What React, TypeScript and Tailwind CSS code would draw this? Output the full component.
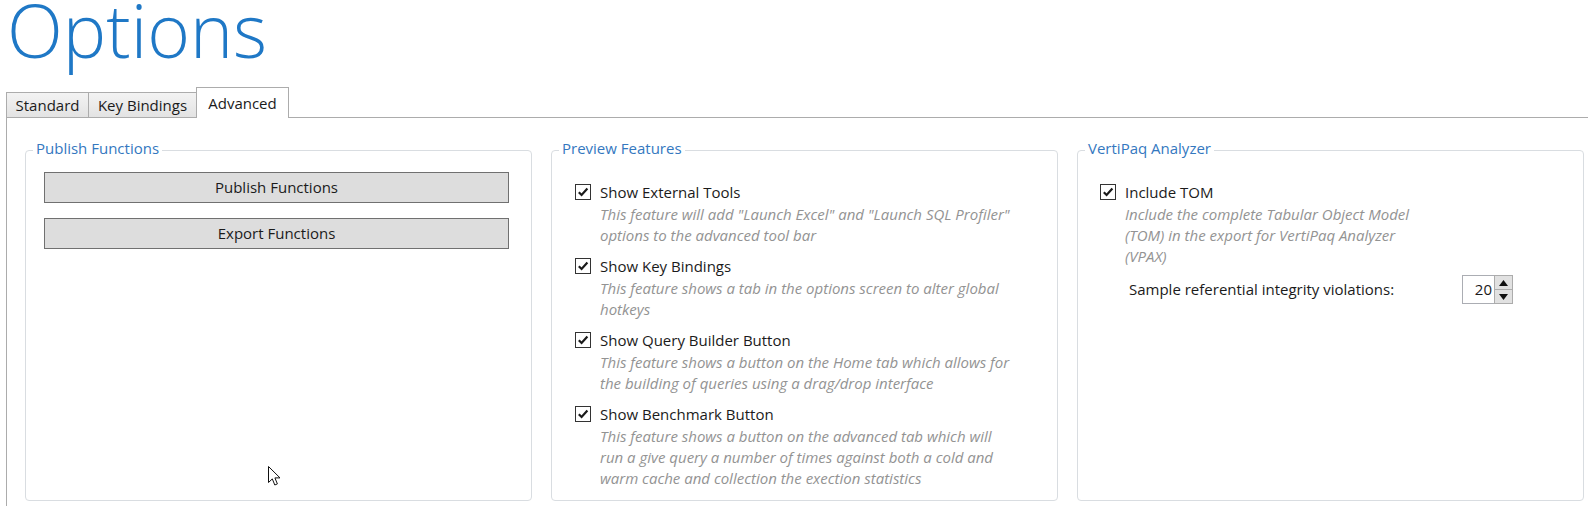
import { ReactNode } from "react";

function CheckBox() {
  return (
    <span className="mt-[2px] flex h-[16px] w-[16px] shrink-0 items-center justify-center border border-[#333333] bg-white">
      <svg width="12" height="12" viewBox="0 0 12 12">
        <path d="M1.8 6.2 L4.6 9 L10.4 2.6" fill="none" stroke="#1a1a1a" strokeWidth="2.2" />
      </svg>
    </span>
  );
}

function Group({ title, children }: { title: string; children: ReactNode }) {
  return (
    <div className="relative h-[351px] w-[507px] shrink-0 rounded-[4px] border border-[#d9dde1]">
      <span className="absolute -top-[13px] left-[7px] bg-white px-[3px] text-[15px] leading-[21px] text-[#3478bf]">
        {title}
      </span>
      {children}
    </div>
  );
}

function Feature({ label, lines }: { label: string; lines: string[] }) {
  return (
    <div className="mb-[10px] flex gap-[9px]">
      <CheckBox />
      <div className="flex flex-col">
        <span className="text-[15px] leading-[21px] text-[#1b1b1b]">{label}</span>
        <p className="mt-[1px] text-[15px] italic leading-[21px] text-[#939393]">
          {lines.map((l, i) => (
            <span key={i} className="block whitespace-nowrap">
              {l}
            </span>
          ))}
        </p>
      </div>
    </div>
  );
}

const tabs = [
  { name: "Standard", w: "w-[83px]" },
  { name: "Key Bindings", w: "w-[109px] -ml-px" },
];

export default function App() {
  return (
    <div className="relative h-[506px] w-[1588px] overflow-hidden bg-white font-['Open_Sans','Noto_Sans',sans-serif] text-[#1b1b1b]">
      <div className="h-[60px] pl-[7px] text-[73px] font-light leading-[60px] text-[#1f78c6]">
        Options
      </div>

      <div className="mt-[27px] flex h-[30px] items-end pl-[6px]">
        {tabs.map((t) => (
          <div
            key={t.name}
            className={`${t.w} flex h-[25px] items-center justify-center border border-b-0 border-[#acacac] bg-gradient-to-b from-[#f3f3f3] to-[#e3e3e3] text-[15px] text-[#1b1b1b]`}
          >
            {t.name}
          </div>
        ))}
        <div className="relative z-10 -mb-px -ml-px flex h-[31px] w-[93px] items-center justify-center border border-b-0 border-[#acacac] bg-white text-[15px] text-[#1b1b1b]">
          Advanced
        </div>
      </div>

      <div className="ml-[6px] h-[420px] w-[1600px] border border-[#acacac]">
        <div className="flex gap-[19px] pl-[18px] pt-[32px]">
          <Group title="Publish Functions">
            <div className="flex flex-col gap-[15px] pl-[18px] pt-[21px]">
              <button className="h-[31px] w-[465px] border border-[#707070] bg-[#dddddd] text-[15px] text-[#1b1b1b]">
                Publish Functions
              </button>
              <button className="h-[31px] w-[465px] border border-[#707070] bg-[#dddddd] text-[15px] text-[#1b1b1b]">
                Export Functions
              </button>
            </div>
          </Group>

          <Group title="Preview Features">
            <div className="flex flex-col pl-[23px] pt-[31px]">
              <Feature
                label="Show External Tools"
                lines={[
                  'This feature will add "Launch Excel" and "Launch SQL Profiler"',
                  "options to the advanced tool bar",
                ]}
              />
              <Feature
                label="Show Key Bindings"
                lines={[
                  "This feature shows a tab in the options screen to alter global",
                  "hotkeys",
                ]}
              />
              <Feature
                label="Show Query Builder Button"
                lines={[
                  "This feature shows a button on the Home tab which allows for",
                  "the building of queries using a drag/drop interface",
                ]}
              />
              <Feature
                label="Show Benchmark Button"
                lines={[
                  "This feature shows a button on the advanced tab which will",
                  "run a give query a number of times against both a cold and",
                  "warm cache and collection the exection statistics",
                ]}
              />
            </div>
          </Group>

          <Group title="VertiPaq Analyzer">
            <div className="flex flex-col pl-[22px] pt-[31px]">
              <div className="flex gap-[9px]">
                <CheckBox />
                <div className="flex flex-col">
                  <span className="text-[15px] leading-[21px]">Include TOM</span>
                  <p className="mt-[1px] text-[15px] italic leading-[21px] text-[#939393]">
                    <span className="block whitespace-nowrap">Include the complete Tabular Object Model</span>
                    <span className="block whitespace-nowrap">(TOM) in the export for VertiPaq Analyzer</span>
                    <span className="block whitespace-nowrap">(VPAX)</span>
                  </p>
                  <div className="mt-[8px] ml-[4px] flex h-[29px] items-center">
                    <span className="w-[333px] text-[15px] leading-[21px]">
                      Sample referential integrity violations:
                    </span>
                    <div className="flex h-[29px]">
                      <div className="flex w-[33px] items-center justify-end border border-[#abadb3] bg-white pr-[2px] text-[15px]">
                        20
                      </div>
                      <div className="-ml-px flex w-[19px] flex-col">
                        <div className="flex h-[15px] items-center justify-center border border-[#acacac] bg-[#e1e1e1]">
                          <svg width="9" height="6" viewBox="0 0 9 6">
                            <path d="M0 6 L4.5 0 L9 6 Z" fill="#111" />
                          </svg>
                        </div>
                        <div className="-mt-px flex h-[15px] items-center justify-center border border-[#acacac] bg-[#e1e1e1]">
                          <svg width="9" height="6" viewBox="0 0 9 6">
                            <path d="M0 0 L9 0 L4.5 6 Z" fill="#111" />
                          </svg>
                        </div>
                      </div>
                    </div>
                  </div>
                </div>
              </div>
            </div>
          </Group>
        </div>
      </div>

      <svg
        className="absolute left-[268px] top-[466px]"
        width="13"
        height="21"
        viewBox="0 0 13 21"
      >
        <path
          d="M0.5 0.5 L0.5 16.5 L4.3 12.9 L6.8 19 L9.4 17.9 L6.9 11.9 L12 11.9 Z"
          fill="#ffffff"
          stroke="#111111"
          strokeWidth="1"
          strokeLinejoin="round"
        />
      </svg>
    </div>
  );
}
